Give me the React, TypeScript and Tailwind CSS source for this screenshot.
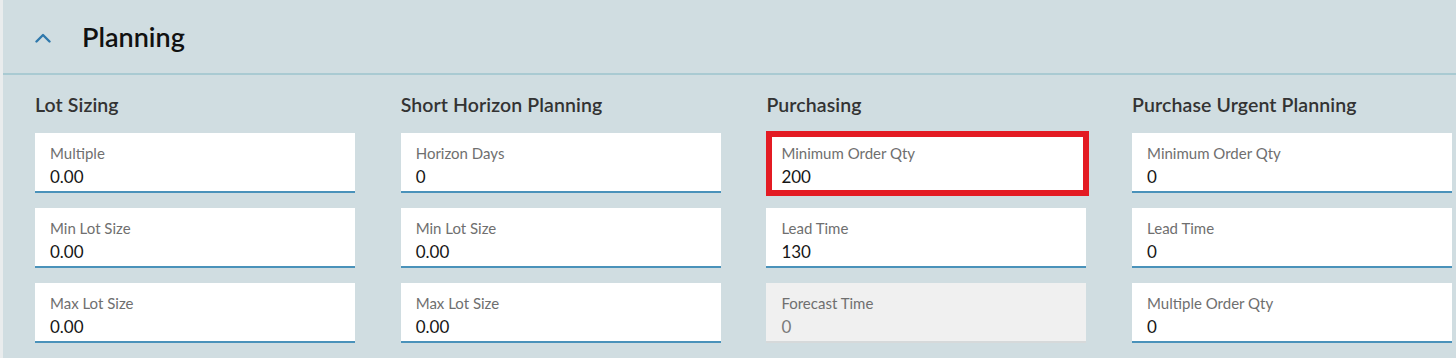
interface Field {
  label: string;
  value: string;
  disabled?: boolean;
  flagged?: boolean;
}

interface Group {
  title: string;
  fields: Field[];
}

const groups: Group[] = [
  {
    title: "Lot Sizing",
    fields: [
      { label: "Multiple", value: "0.00" },
      { label: "Min Lot Size", value: "0.00" },
      { label: "Max Lot Size", value: "0.00" },
    ],
  },
  {
    title: "Short Horizon Planning",
    fields: [
      { label: "Horizon Days", value: "0" },
      { label: "Min Lot Size", value: "0.00" },
      { label: "Max Lot Size", value: "0.00" },
    ],
  },
  {
    title: "Purchasing",
    fields: [
      { label: "Minimum Order Qty", value: "200", flagged: true },
      { label: "Lead Time", value: "130" },
      { label: "Forecast Time", value: "0", disabled: true },
    ],
  },
  {
    title: "Purchase Urgent Planning",
    fields: [
      { label: "Minimum Order Qty", value: "0" },
      { label: "Lead Time", value: "0" },
      { label: "Multiple Order Qty", value: "0" },
    ],
  },
];

const FieldBox = ({ field }: { field: Field }) => (
  <div
    className={`relative h-[60px] px-[15px] pt-[10px] border-b-2 ${
      field.disabled ? "bg-[#f0f0f0] border-[#d6d9da]" : "bg-white border-[#4a92ba]"
    }`}
  >
    <div className="text-[15px] leading-[20px] text-[#6f6f6f]">{field.label}</div>
    <div
      className={`mt-[3px] text-[17px] leading-[22px] ${
        field.disabled ? "text-[#7a7a7a]" : "text-[#161616]"
      }`}
    >
      {field.value}
    </div>
    {field.flagged && (
      <div className="absolute -top-[2px] left-0 -right-[3px] -bottom-[5px] border-[6px] border-[#e31b23]" />
    )}
  </div>
);

const App = () => {
  return (
    <div
      className="flex w-[1456px] h-[358px] overflow-hidden bg-[#d0dde1]"
      style={{ fontFamily: "Lato, 'Open Sans', sans-serif" }}
    >
      <div className="w-[3px] shrink-0 bg-[#e9eced]" />
      <div className="flex-1 min-w-0">
        <div className="h-[75px] flex items-center pl-[32px] pt-[2px] border-b-2 border-[#a9cad2]">
          <svg width="16" height="10" viewBox="0 0 16 10" className="shrink-0">
            <polyline
              points="1.5,8.5 8,2 14.5,8.5"
              fill="none"
              stroke="#2f78ac"
              strokeWidth="2.4"
              strokeLinecap="round"
              strokeLinejoin="round"
            />
          </svg>
          <span className="ml-[31px] text-[27px] font-semibold text-[#111]">Planning</span>
        </div>
        <div className="flex gap-[45.7px] pl-[32px] pt-[18px]">
          {groups.map((group) => (
            <div key={group.title} className="w-[320px] shrink-0">
              <div className="text-[19.5px] leading-[24px] font-semibold text-[#333] mb-[16px] tracking-[0.1px]">
                {group.title}
              </div>
              <div className="flex flex-col gap-[15px]">
                {group.fields.map((field) => (
                  <FieldBox key={field.label} field={field} />
                ))}
              </div>
            </div>
          ))}
        </div>
      </div>
    </div>
  );
};

export default App;
